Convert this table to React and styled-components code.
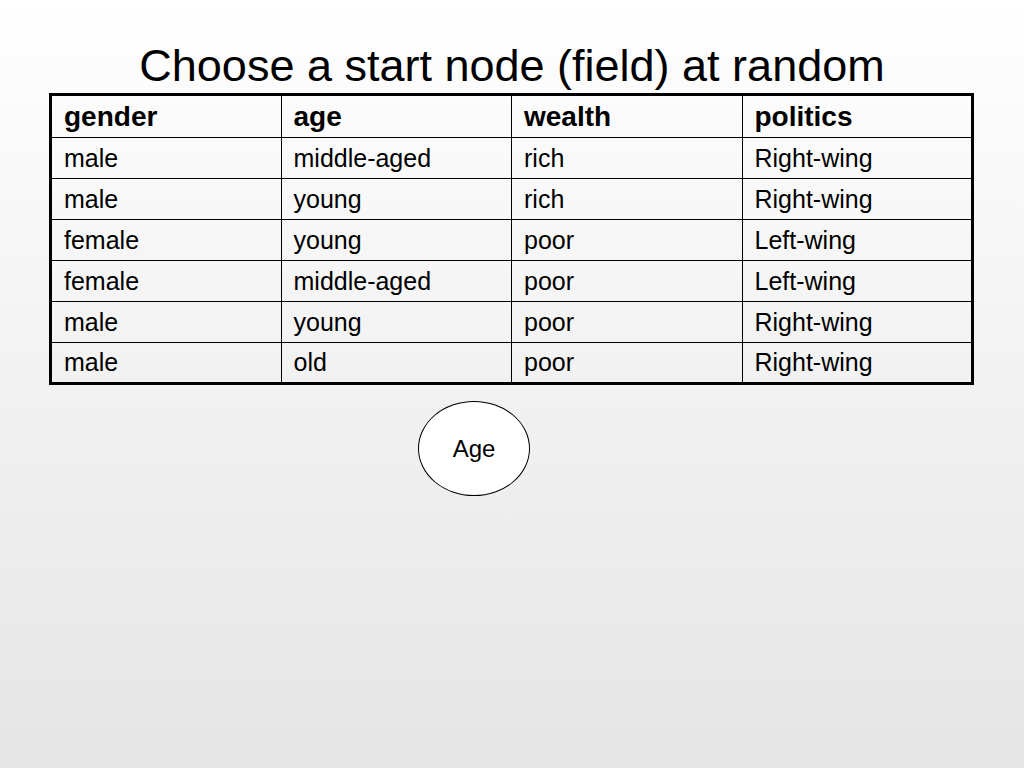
import React from 'react';
import styled, { createGlobalStyle } from 'styled-components';

const GlobalStyle = createGlobalStyle`
	html, body {
		margin: 0;
		padding: 0;
	}
	body {
		width: 1024px;
		height: 768px;
		overflow: hidden;
		font-family: "Liberation Sans", Arial, sans-serif;
		color: #000;
		background: linear-gradient(to bottom, #ffffff 0%, #f4f4f4 40%, #e5e5e5 100%);
	}
`;

const rows = [
	['male', 'middle-aged', 'rich', 'Right-wing'],
	['male', 'young', 'rich', 'Right-wing'],
	['female', 'young', 'poor', 'Left-wing'],
	['female', 'middle-aged', 'poor', 'Left-wing'],
	['male', 'young', 'poor', 'Right-wing'],
	['male', 'old', 'poor', 'Right-wing'],
];

const headers = ['gender', 'age', 'wealth', 'politics'];

export default function App() {
	return (
		<>
			<GlobalStyle />
			<Slide>
				<Title>Choose a start node (field) at random</Title>
				<DataTable>
					<thead>
						<tr>
							{headers.map(h => <HeadCell key={h}>{h}</HeadCell>)}
						</tr>
					</thead>
					<tbody>
						{rows.map((r, i) => (
							<tr key={i}>
								{r.map((c, j) => <Cell key={j}>{c}</Cell>)}
							</tr>
						))}
					</tbody>
				</DataTable>
				<NodeArea>
					<Node>Age</Node>
				</NodeArea>
			</Slide>
		</>
	);
}

const Slide = styled.div`
	display: flex;
	flex-direction: column;
	width: 1024px;
	height: 768px;
`;

const Title = styled.h1`
	margin: 0;
	height: 93px;
	padding-top: 39px;
	box-sizing: border-box;
	font-size: 45px;
	font-weight: normal;
	line-height: 54px;
	text-align: center;
`;

const DataTable = styled.table`
	margin-left: 49px;
	width: 925px;
	border-collapse: collapse;
	border: 3px solid #000;
	table-layout: fixed;
`;

const HeadCell = styled.th`
	height: 43px;
	padding: 0 12px;
	box-sizing: border-box;
	border: 1px solid #000;
	font-size: 28px;
	font-weight: bold;
	text-align: left;
	white-space: nowrap;
`;

const Cell = styled.td`
	height: 41px;
	padding: 0 12px;
	box-sizing: border-box;
	border: 1px solid #000;
	font-size: 25px;
	font-weight: normal;
	text-align: left;
	white-space: nowrap;
`;

const NodeArea = styled.div`
	padding-top: 16px;
	padding-left: 418px;
`;

const Node = styled.div`
	display: flex;
	align-items: center;
	justify-content: center;
	width: 112px;
	height: 95px;
	box-sizing: border-box;
	border: 1px solid #000;
	border-radius: 50%;
	background: #fff;
	font-size: 24px;
`;
